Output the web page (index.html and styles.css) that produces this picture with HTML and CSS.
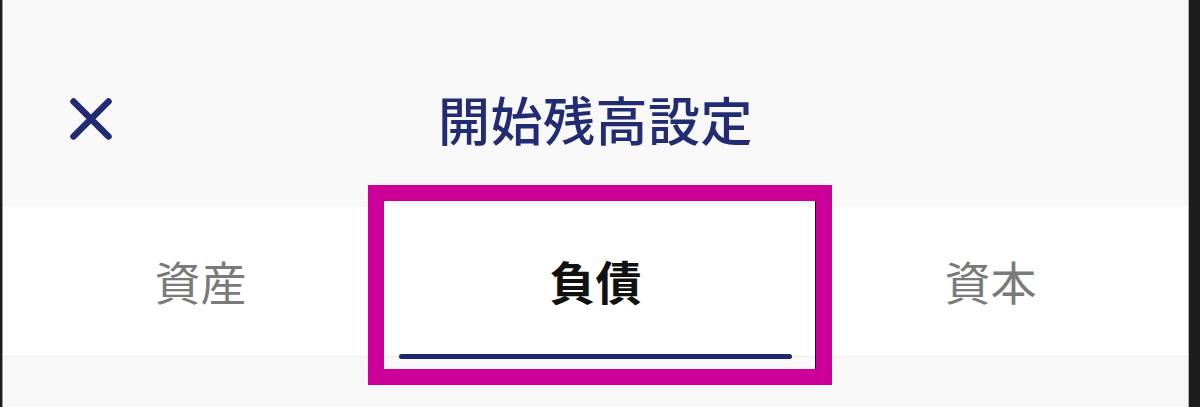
FILE: index.html
```html
<!DOCTYPE html>
<html lang="ja">
<head>
<meta charset="utf-8">
<title>開始残高設定</title>
<link rel="stylesheet" href="styles.css">
</head>
<body>
<div class="device">
  <div class="screen">
    <header class="header">
      <button class="close" aria-label="閉じる">
        <svg viewBox="0 0 44 44" width="44" height="44">
          <path d="M4.5 4.5 L39.5 39.5 M39.5 4.5 L4.5 39.5" stroke="currentColor" stroke-width="6.5" stroke-linecap="round" fill="none"/>
        </svg>
      </button>
      <h1 class="title">開始残高設定</h1>
      <div class="spacer"></div>
    </header>
    <nav class="tabs">
      <div class="tab">資産</div>
      <div class="tab active">負債</div>
      <div class="tab">資本</div>
    </nav>
    <div class="content"></div>
  </div>
  <div class="highlight"></div>
</div>
</body>
</html>
```

FILE: styles.css
```css
* { box-sizing: border-box; }
html, body {
  margin: 0;
  padding: 0;
  background: #ffffff;
}
body {
  font-family: "Noto Sans CJK JP", "Noto Sans", sans-serif;
}
.device {
  position: relative;
  width: 1200px;
  height: 407px;
  display: flex;
  background: #1c1c1c;
  border-left: 2px solid #1c1c1c;
  padding-right: 13px;
}
.screen {
  flex: 1;
  display: flex;
  flex-direction: column;
  background: #f8f8f8;
  border-left: 1px solid #9a9a9a;
  border-right: 1px solid #b5b5b5;
}
.header {
  height: 207px;
  flex: none;
  padding-top: 30px;
  display: grid;
  grid-template-columns: 1fr auto 1fr;
  align-items: center;
  background: #f8f8f8;
}
.close {
  justify-self: start;
  margin-left: 66px;
  padding: 0;
  border: 0;
  background: none;
  color: #222b72;
  width: 44px;
  height: 44px;
  display: flex;
}
.title {
  margin: 0;
  font-size: 52px;
  font-weight: 500;
  color: #232c72;
  line-height: 1;
  letter-spacing: 0.5px;
}
.tabs {
  flex: none;
  display: grid;
  grid-template-columns: repeat(3, 395px);
  height: 150px;
  background: #ffffff;
  border-bottom: 1px solid #ededed;
}
.tab {
  position: relative;
  display: flex;
  align-items: center;
  justify-content: center;
  font-size: 46px;
  color: #7a7a7a;
  font-weight: 400;
  line-height: 1;
  padding-bottom: 4px;
}
.tab.active {
  color: #111111;
  font-weight: 700;
}
.tab.active::after {
  content: "";
  position: absolute;
  left: 1px;
  right: 1px;
  bottom: -3px;
  height: 5px;
  border-radius: 3px;
  background: #1e2670;
}
.content {
  flex: 1;
  background: #f8f8f8;
}
.highlight {
  position: absolute;
  left: 366px;
  top: 185px;
  width: 464px;
  height: 200px;
  border: 16px solid #cc0099;
  box-shadow: inset -1px 0 0 #111;
}
```
